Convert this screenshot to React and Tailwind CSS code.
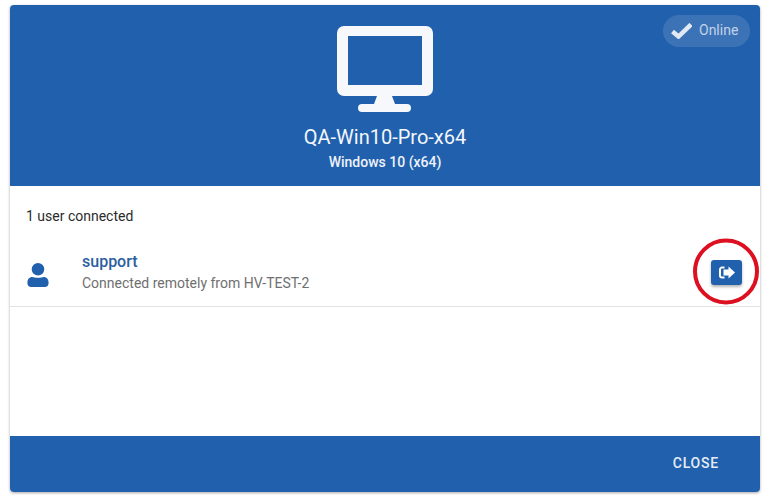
import React from "react";

function Monitor() {
  return (
    <svg width="96" height="86" viewBox="0 0 96 86" className="block">
      <path fillRule="evenodd" fill="#f6f8fc" d="M7 0H89a7 7 0 0 1 7 7V63a7 7 0 0 1-7 7H55L58 78H70a4 4 0 0 1 0 8H25a4 4 0 0 1 0-8H37L40 70H7a7 7 0 0 1-7-7V7a7 7 0 0 1 7-7ZM11 10V59H85V10Z" />
    </svg>
  );
}

function User() {
  return (
    <svg width="22" height="24" viewBox="0 0 22 25" className="block">
      <circle cx="11" cy="6.500" r="6.500" fill="#2160ad" />
      <path fill="#2160ad" d="M5 14.500C7 15.600 15 15.600 17 14.500C20 14.500 22 17 22 20V21C22 23.200 20.500 25 18 25H4C1.500 25 0 23.200 0 21V20C0 17 2 14.500 5 14.500Z" />
    </svg>
  );
}

function Logout() {
  return (
    <svg width="16" height="13" viewBox="0 0 16 13" className="block">
      <path fill="none" stroke="#fff" strokeWidth="2" d="M5.500 1.500H3a2 2 0 0 0-2 2v6a2 2 0 0 0 2 2h2.500" />
      <path fill="#fff" d="M9.500 0.500L16 6.500L9.500 12.500V9.500H4.500V3.500H9.500Z" />
    </svg>
  );
}

export default function App() {
  return (
    <div className="w-[766px] h-[495px] bg-white pt-[5px] pl-[10px] relative overflow-hidden font-['Roboto',sans-serif]">
      <div className="w-[750px] h-[487px] flex flex-col rounded-[4px] overflow-hidden bg-white shadow-[0_1px_3px_rgba(0,0,0,0.35)]">
        <header className="h-[181px] shrink-0 bg-[#2160ad] relative flex flex-col items-center pt-[21px]">
          <Monitor />
          <h1 className="mt-[12px] text-[20px] leading-[26px] text-[#f3f6fb] font-normal">QA-Win10-Pro-x64</h1>
          <p className="mt-[3px] text-[14px] leading-[18px] font-medium text-[#eef2f9]">Windows 10 (x64)</p>
          <div className="absolute top-[10px] right-[10px] h-[32px] w-[87px] rounded-full bg-[#3c73b7] flex items-center pl-[8px] gap-[7px] pb-[2px]">
            <svg width="21" height="16" viewBox="0 0 21 16" className="block mt-[2px]">
              <path fill="none" stroke="#e3e9f3" strokeWidth="4.500" d="M1.500 8.500L7.500 13.500L20 1.500" />
            </svg>
            <span className="text-[14px] leading-[20px] text-[#c3d2e8]">Online</span>
          </div>
        </header>
        <main className="flex-1 min-h-0">
          <p className="pl-[16px] pt-[22px] text-[14px] leading-[16px] text-[#2b2b2b]">1 user connected</p>
          <div className="mt-[21px] h-[62px] flex items-start border-b border-[#e2e2e2]">
            <div className="pl-[17px] pt-[18px] w-[72px] shrink-0"><User /></div>
            <div className="flex-1 pt-[7px]">
              <div className="text-[16px] leading-[20px] font-medium text-[#2b5f9f]">support</div>
              <div className="mt-[1px] text-[14px] leading-[20px] text-[#6f6f6f]">Connected remotely from HV-TEST-2</div>
            </div>
            <button className="mt-[15px] mr-[18px] w-[31px] h-[25px] rounded-[3px] bg-[#2160ad] flex items-center justify-center shadow-[0_2px_3px_rgba(0,0,0,0.3)]">
              <Logout />
            </button>
          </div>
        </main>
        <footer className="h-[56px] shrink-0 bg-[#2160ad] flex items-center justify-end pr-[41px] pb-[2px]">
          <span className="text-[14px] font-medium tracking-[0.8px] text-[#e6edf6]">CLOSE</span>
        </footer>
      </div>
      <svg width="68" height="68" viewBox="0 0 68 68" className="absolute left-[692px] top-[238px]">
        <ellipse cx="34" cy="33.500" rx="31" ry="31" fill="none" stroke="#dc1020" strokeWidth="4" />
      </svg>
    </div>
  );
}
